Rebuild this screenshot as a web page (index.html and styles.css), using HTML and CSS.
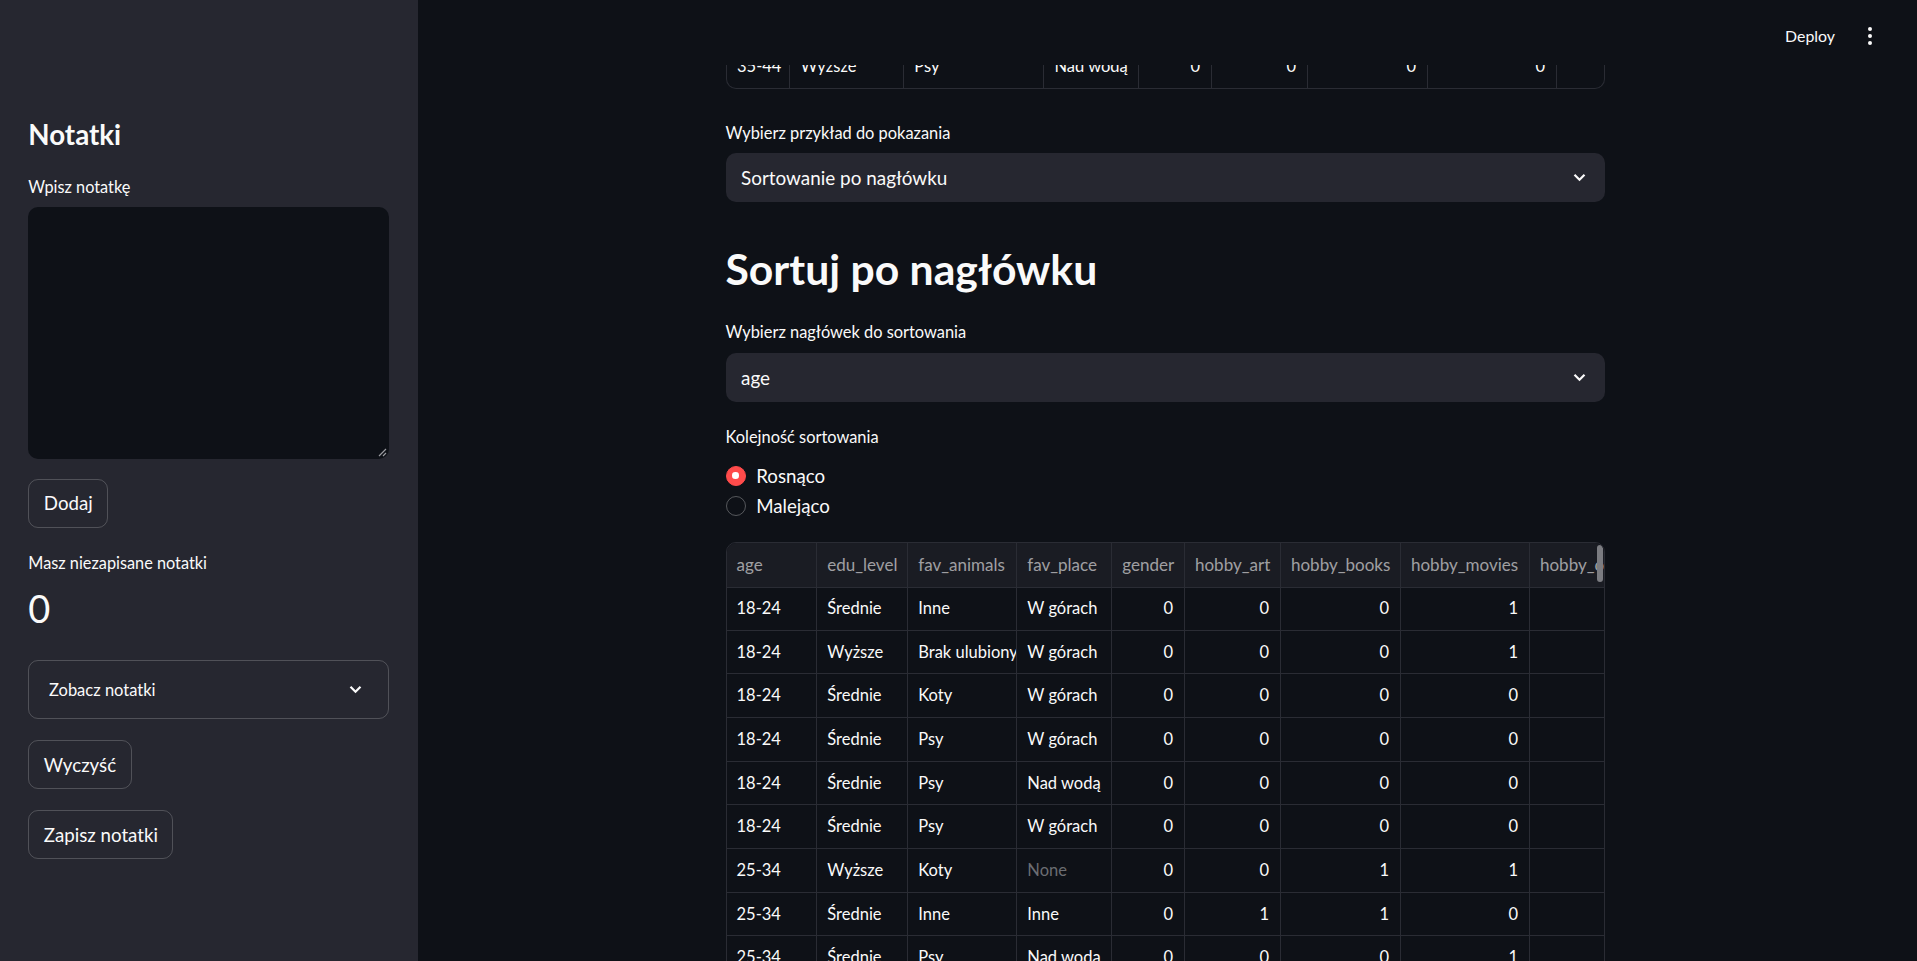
FILE: index.html
```html
<!DOCTYPE html>
<html lang="pl">
<head>
<meta charset="utf-8">
<title>Notatki</title>
<link rel="stylesheet" href="styles.css">
</head>
<body>
<div class="app">
  <aside class="sidebar">
    <h1 class="sb-title">Notatki</h1>
    <label class="sb-label">Wpisz notatkę</label>
    <div class="textarea-wrap">
      <textarea class="textarea"></textarea>
      <svg class="grip" width="10" height="10" viewBox="0 0 10 10"><path d="M9 2 L2 9 M9 6 L6 9" stroke="#9a9ba0" stroke-width="1.2" fill="none"/></svg>
    </div>
    <button class="btn btn-first">Dodaj</button>
    <div class="metric-label">Masz niezapisane notatki</div>
    <div class="metric-value">0</div>
    <div class="expander">
      <span>Zobacz notatki</span>
      <svg width="13" height="9" viewBox="0 0 13 9"><path d="M1.5 1.8 L6.5 6.8 L11.5 1.8" stroke="#fafafa" stroke-width="2.2" fill="none"/></svg>
    </div>
    <button class="btn btn-next">Wyczyść</button>
    <button class="btn btn-next">Zapisz notatki</button>
  </aside>

  <main class="main">
    <header class="topbar">
      <span class="deploy">Deploy</span>
      <svg class="kebab" width="4" height="18" viewBox="0 0 4 18"><circle cx="2" cy="2" r="2" fill="#fafafa"/><circle cx="2" cy="9" r="2" fill="#fafafa"/><circle cx="2" cy="16" r="2" fill="#fafafa"/></svg>
    </header>

    <div class="content">
      <div class="df-tail">
        <div class="c w1">35-44</div>
        <div class="c w2">Wyższe</div>
        <div class="c w3">Psy</div>
        <div class="c w4">Nad wodą</div>
        <div class="c w5 n">0</div>
        <div class="c w6 n">0</div>
        <div class="c w7 n">0</div>
        <div class="c w8 n">0</div>
        <div class="c w9"></div>
      </div>

      <div class="label lbl-first">Wybierz przykład do pokazania</div>
      <div class="select">
        <span>Sortowanie po nagłówku</span>
        <svg width="13" height="9" viewBox="0 0 13 9"><path d="M1.5 1.8 L6.5 6.8 L11.5 1.8" stroke="#fafafa" stroke-width="2.2" fill="none"/></svg>
      </div>

      <h2 class="heading">Sortuj po nagłówku</h2>

      <div class="label lbl-second">Wybierz nagłówek do sortowania</div>
      <div class="select">
        <span>age</span>
        <svg width="13" height="9" viewBox="0 0 13 9"><path d="M1.5 1.8 L6.5 6.8 L11.5 1.8" stroke="#fafafa" stroke-width="2.2" fill="none"/></svg>
      </div>

      <div class="label lbl-third">Kolejność sortowania</div>
      <div class="radio radio-first"><span class="dot on"></span><span>Rosnąco</span></div>
      <div class="radio radio-next"><span class="dot"></span><span>Malejąco</span></div>

      <div class="grid-wrap">
        <div class="grid">
          <div class="h">age</div><div class="h">edu_level</div><div class="h">fav_animals</div><div class="h">fav_place</div><div class="h">gender</div><div class="h">hobby_art</div><div class="h">hobby_books</div><div class="h">hobby_movies</div><div class="h">hobby_other</div>

          <div class="d">18-24</div><div class="d">Średnie</div><div class="d">Inne</div><div class="d">W górach</div><div class="d n">0</div><div class="d n">0</div><div class="d n">0</div><div class="d n">1</div><div class="d n">0</div>
          <div class="d">18-24</div><div class="d">Wyższe</div><div class="d">Brak ulubionych</div><div class="d">W górach</div><div class="d n">0</div><div class="d n">0</div><div class="d n">0</div><div class="d n">1</div><div class="d n">0</div>
          <div class="d">18-24</div><div class="d">Średnie</div><div class="d">Koty</div><div class="d">W górach</div><div class="d n">0</div><div class="d n">0</div><div class="d n">0</div><div class="d n">0</div><div class="d n">1</div>
          <div class="d">18-24</div><div class="d">Średnie</div><div class="d">Psy</div><div class="d">W górach</div><div class="d n">0</div><div class="d n">0</div><div class="d n">0</div><div class="d n">0</div><div class="d n">0</div>
          <div class="d">18-24</div><div class="d">Średnie</div><div class="d">Psy</div><div class="d">Nad wodą</div><div class="d n">0</div><div class="d n">0</div><div class="d n">0</div><div class="d n">0</div><div class="d n">0</div>
          <div class="d">18-24</div><div class="d">Średnie</div><div class="d">Psy</div><div class="d">W górach</div><div class="d n">0</div><div class="d n">0</div><div class="d n">0</div><div class="d n">0</div><div class="d n">1</div>
          <div class="d">25-34</div><div class="d">Wyższe</div><div class="d">Koty</div><div class="d none">None</div><div class="d n">0</div><div class="d n">0</div><div class="d n">1</div><div class="d n">1</div><div class="d n">0</div>
          <div class="d">25-34</div><div class="d">Średnie</div><div class="d">Inne</div><div class="d">Inne</div><div class="d n">0</div><div class="d n">1</div><div class="d n">1</div><div class="d n">0</div><div class="d n">0</div>
          <div class="d">25-34</div><div class="d">Średnie</div><div class="d">Psy</div><div class="d">Nad wodą</div><div class="d n">0</div><div class="d n">0</div><div class="d n">0</div><div class="d n">1</div><div class="d n">0</div>
          <div class="d">25-34</div><div class="d">Wyższe</div><div class="d">Koty</div><div class="d">W górach</div><div class="d n">0</div><div class="d n">1</div><div class="d n">0</div><div class="d n">0</div><div class="d n">0</div>
        </div>
        <span class="scroll-thumb"></span>
      </div>
    </div>
  </main>
</div>
</body>
</html>
```
FILE: styles.css
```css
* { box-sizing: border-box; }

html, body {
  margin: 0;
  height: 100%;
  overflow: hidden;
}

body {
  background: #0e1117;
  color: #fafafa;
  font-family: Lato, "Noto Sans", sans-serif;
}

.app {
  display: flex;
  height: 961px;
}

/* ---------- Sidebar ---------- */
.sidebar {
  width: 418px;
  flex: none;
  background: #262730;
  display: flex;
  flex-direction: column;
  align-items: flex-start;
  padding: 117px 29px 0 28.3px;
}

.sb-title {
  margin: 0;
  font-size: 27.7px;
  font-weight: 700;
  line-height: 36px;
}

.sb-label {
  margin-top: 23px;
  font-size: 16.3px;
  line-height: 22px;
}

.textarea-wrap {
  position: relative;
  margin-top: 9px;
  width: 100%;
  height: 251.7px;
}

.textarea {
  display: block;
  width: 100%;
  height: 100%;
  background: #0e1117;
  border: none;
  border-radius: 10px;
  resize: none;
  outline: none;
}

.grip {
  position: absolute;
  right: 2px;
  bottom: 2px;
}

.btn {
  height: 49px;
  padding: 0 14.5px;
  border: 1px solid rgba(250, 250, 250, 0.2);
  border-radius: 10px;
  background: transparent;
  color: #fafafa;
  font-family: inherit;
  font-size: 18.7px;
  line-height: 24px;
}

.btn-first { margin-top: 20.3px; }
.btn-next { margin-top: 21px; }

.metric-label {
  margin-top: 24.5px;
  font-size: 16.3px;
  line-height: 22px;
}

.metric-value {
  margin-top: 10.8px;
  font-size: 38px;
  line-height: 46px;
}

.expander {
  margin-top: 29.2px;
  width: 100%;
  height: 58.6px;
  border: 1px solid rgba(250, 250, 250, 0.2);
  border-radius: 10px;
  display: flex;
  align-items: center;
  justify-content: space-between;
  padding: 0 26px 0 19.7px;
  font-size: 16.5px;
  line-height: 22px;
}

/* ---------- Main ---------- */
.main {
  flex: 1;
  position: relative;
  padding-right: 5px;
  overflow: hidden;
}

.topbar {
  position: absolute;
  top: 0;
  left: 0;
  right: 0;
  height: 65px;
  z-index: 2;
  background: #0e1117;
  display: flex;
  justify-content: flex-end;
  align-items: flex-start;
  padding: 25px 45px 0 0;
}

.deploy {
  font-size: 15.9px;
  line-height: 22px;
}

.kebab {
  margin-left: 33px;
  margin-top: 2.3px;
}

.content {
  width: 879px;
  margin: 0 auto;
  padding-top: 45px;
  display: flex;
  flex-direction: column;
}

/* tail of the previous dataframe (scrolled under the header) */
.df-tail {
  display: flex;
  height: 44px;
  border: 1px solid #2a2c34;
  border-top: none;
  border-radius: 0 0 10px 10px;
  overflow: hidden;
}

.df-tail .c {
  height: 43px;
  line-height: 43px;
  padding: 0 10.5px;
  font-size: 16.5px;
  border-right: 1px solid #2a2c34;
  white-space: nowrap;
  overflow: hidden;
}

.df-tail .w1 { width: 63.5px; }
.df-tail .w2 { width: 113.7px; }
.df-tail .w3 { width: 140.3px; }
.df-tail .w4 { width: 95px; }
.df-tail .w5 { width: 72.7px; }
.df-tail .w6 { width: 96px; }
.df-tail .w7 { width: 120px; }
.df-tail .w8 { width: 129px; }
.df-tail .w9 { flex: 1; border-right: none; }

.n { text-align: right; }

.label {
  font-size: 16.4px;
  line-height: 22px;
}

.lbl-first { margin-top: 32.6px; }
.lbl-second { margin-top: 26.6px; }
.lbl-third { margin-top: 24.2px; }

.select {
  margin-top: 9.5px;
  height: 49.4px;
  background: #262730;
  border-radius: 10px;
  display: flex;
  align-items: center;
  justify-content: space-between;
  padding: 0 19px 0 15.5px;
  font-size: 18.9px;
  line-height: 24px;
}

.heading {
  margin: 40.3px 0 0;
  font-size: 42.7px;
  font-weight: 700;
  line-height: 52px;
}

.radio {
  display: flex;
  align-items: center;
  gap: 10.7px;
  height: 26px;
  font-size: 18.7px;
  line-height: 26px;
}

.radio-first { margin-top: 14.1px; }
.radio-next { margin-top: 4.7px; }

.dot {
  width: 20px;
  height: 20px;
  border-radius: 50%;
  border: 1.5px solid rgba(250, 250, 250, 0.3);
  display: flex;
  align-items: center;
  justify-content: center;
}

.dot.on {
  background: #ff4b4b;
  border-color: #ff4b4b;
}

.dot.on::after {
  content: "";
  width: 6.5px;
  height: 6.5px;
  border-radius: 50%;
  background: #ffffff;
}

/* ---------- Data grid ---------- */
.grid-wrap {
  position: relative;
  margin-top: 23px;
  border: 1px solid #2a2c34;
  border-radius: 10px;
  overflow: hidden;
}

.grid {
  display: grid;
  grid-template-columns: 90.8px 91px 109px 95px 72.7px 96px 120px 129px 130px;
  grid-auto-rows: 43.7px;
}

.grid .h {
  height: 45px;
  line-height: 44px;
  background: #1a1c23;
  color: rgba(250, 250, 250, 0.6);
  font-size: 17px;
  padding: 0 10px;
  border-right: 1px solid #2a2c34;
  border-bottom: 1px solid #2a2c34;
  white-space: nowrap;
  overflow: hidden;
}

.grid .d {
  height: 43.7px;
  line-height: 42.7px;
  font-size: 16.5px;
  padding: 0 11px 0 10px;
  border-right: 1px solid #2a2c34;
  border-bottom: 1px solid #2a2c34;
  white-space: nowrap;
  overflow: hidden;
}

.grid .none { color: #6b6d72; }

.scroll-thumb {
  position: absolute;
  top: 1.3px;
  right: 1px;
  width: 5.6px;
  height: 37px;
  border-radius: 3px;
  background: #7b7c81;
}
```
